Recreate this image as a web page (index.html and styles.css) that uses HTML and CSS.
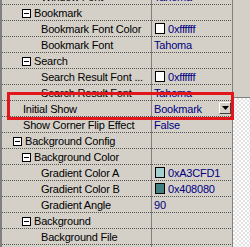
FILE: index.html
```html
<!DOCTYPE html>
<html lang="en">
<head>
    <meta charset="UTF-8">
    <title>Property Grid</title>
    <link rel="stylesheet" href="styles.css">
</head>
<body>
    <div class="frame">
        <div class="grid">
            <div class="row"><div class="name lvl2">Window Font</div><div class="value">Tahoma</div></div>
            <div class="row"><div class="name cat2"><span class="toggle"></span>Bookmark</div><div class="value"></div></div>
            <div class="row"><div class="name lvl2">Bookmark Font Color</div><div class="value"><span class="swatch swatch-white"></span>0xffffff</div></div>
            <div class="row"><div class="name lvl2">Bookmark Font</div><div class="value">Tahoma</div></div>
            <div class="row"><div class="name cat2"><span class="toggle"></span>Search</div><div class="value"></div></div>
            <div class="row"><div class="name lvl2">Search Result Font ...</div><div class="value"><span class="swatch swatch-white"></span>0xffffff</div></div>
            <div class="row"><div class="name lvl2">Search Result Font</div><div class="value">Tahoma</div></div>
            <div class="row selected"><div class="name lvl1">Initial Show</div><div class="value">Bookmark<span class="drop"><svg width="7" height="4" viewBox="0 0 7 4"><path d="M0 0h7L3.5 4z" fill="#000"/></svg></span></div></div>
            <div class="row"><div class="name lvl1">Show Corner Flip Effect</div><div class="value">False</div></div>
            <div class="row"><div class="name cat1"><span class="toggle"></span>Background Config</div><div class="value"></div></div>
            <div class="row"><div class="name cat2"><span class="toggle"></span>Background Color</div><div class="value"></div></div>
            <div class="row"><div class="name lvl2">Gradient Color A</div><div class="value"><span class="swatch swatch-a"></span>0xA3CFD1</div></div>
            <div class="row"><div class="name lvl2">Gradient Color B</div><div class="value"><span class="swatch swatch-b"></span>0x408080</div></div>
            <div class="row"><div class="name lvl2">Gradient Angle</div><div class="value">90</div></div>
            <div class="row"><div class="name cat2"><span class="toggle"></span>Background</div><div class="value"></div></div>
            <div class="row"><div class="name lvl2">Background File</div><div class="value"></div></div>
            <div class="row"><div class="name lvl2"></div><div class="value"></div></div>
        </div>
        <div class="side">
            <div class="thumb"></div>
            <div class="rest"></div>
        </div>
        <div class="highlight"></div>
    </div>
</body>
</html>
```

FILE: styles.css
```css
body {
    margin: 0;
    background: #d4d0c8;
    font-family: "Liberation Sans", Arial, sans-serif;
    font-size: 11px;
    letter-spacing: -0.2px;
    color: #000;
    overflow: hidden;
}
.frame {
    position: relative;
    display: flex;
    width: 250px;
    height: 247px;
    overflow: hidden;
}
.grid {
    width: 230px;
    margin-top: -11px;
    border-left: 2px solid #808080;
    border-right: 1px solid #808080;
}
.row {
    display: flex;
    height: 16px;
}
.name, .value {
    box-sizing: border-box;
    height: 16px;
    padding: 1px 0;
    line-height: 14px;
    display: flex;
    align-items: flex-start;
    white-space: nowrap;
    overflow: hidden;
    /* dotted separator under each row */
    background-image: repeating-linear-gradient(to right, #555 0 1px, transparent 1px 2px);
    background-size: 100% 1px;
    background-position: left bottom;
    background-repeat: no-repeat;
}
.name {
    width: 150px;
    border-right: 1px solid #808080;
}
.value {
    flex: 1;
    padding-left: 2px;
    color: #000080;
}
.lvl1 { padding-left: 21px; }
.lvl2 { padding-left: 39px; }
.cat1 { padding-left: 11px; }
.cat2 { padding-left: 20px; }
.toggle {
    position: relative;
    flex: none;
    width: 9px;
    height: 9px;
    box-sizing: border-box;
    margin: 3px 3px 0 0;
    border: 1px solid #000;
    background: #fff;
}
.toggle::after {
    content: "";
    position: absolute;
    left: 1px;
    top: 3px;
    width: 5px;
    height: 1px;
    background: #000;
}
.swatch {
    flex: none;
    width: 10px;
    height: 11px;
    box-sizing: border-box;
    margin: 1px 3px 0 1px;
    border: 1px solid #000;
}
.swatch-white { background: #fff; }
.swatch-a { background: #a3cfd1; }
.swatch-b { background: #408080; }
.drop {
    flex: none;
    display: flex;
    align-items: center;
    justify-content: center;
    width: 12px;
    height: 12px;
    box-sizing: border-box;
    margin: 0 1px 0 auto;
    border: 1px solid;
    border-color: #fff #404040 #404040 #fff;
    background: #d4d0c8;
}
.side {
    width: 17px;
    display: flex;
    flex-direction: column;
}
.thumb {
    height: 97px;
    border-bottom: 1px solid #808080;
    background: #d4d0c8;
}
.rest {
    flex: 1;
    background: repeating-conic-gradient(#ffffff 0 25%, #e2e2e2 0 50%) 0 0 / 4px 4px;
}
.highlight {
    position: absolute;
    left: 7px;
    top: 92px;
    width: 227px;
    height: 28px;
    box-sizing: border-box;
    border: 3px solid #e3171b;
}
```
